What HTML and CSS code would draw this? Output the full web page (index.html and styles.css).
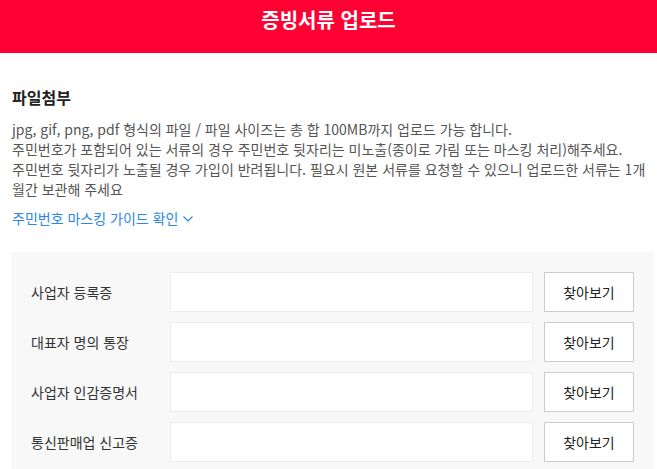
FILE: index.html
```html
<!DOCTYPE html>
<html lang="ko">
<head>
    <meta charset="UTF-8">
    <meta name="viewport" content="width=device-width, initial-scale=1.0">
    <title>증빙서류 업로드</title>
    <link rel="stylesheet" href="styles.css">
</head>
<body>
    <header class="top-bar">증빙서류 업로드</header>

    <section class="attach">
        <h2 class="attach-title">파일첨부</h2>
        <p class="attach-desc">
            jpg, gif, png, pdf 형식의 파일 / 파일 사이즈는 총 합 100MB까지 업로드 가능 합니다.<br>
            주민번호가 포함되어 있는 서류의 경우 주민번호 뒷자리는 미노출(종이로 가림 또는 마스킹 처리)해주세요.<br>
            주민번호 뒷자리가 노출될 경우 가입이 반려됩니다. 필요시 원본 서류를 요청할 수 있으니 업로드한 서류는 1개월간 보관해 주세요
        </p>
        <a class="guide-link" href="#">주민번호 마스킹 가이드 확인
            <svg class="chevron" width="10" height="6" viewBox="0 0 10 6"><path d="M0.5 0.5 L5 5 L9.5 0.5" fill="none" stroke="currentColor" stroke-width="1.2"/></svg>
        </a>

        <div class="file-box">
            <div class="file-row">
                <label class="file-label">사업자 등록증</label>
                <input class="file-name" type="text" readonly>
                <button class="file-btn">찾아보기</button>
            </div>
            <div class="file-row">
                <label class="file-label">대표자 명의 통장</label>
                <input class="file-name" type="text" readonly>
                <button class="file-btn">찾아보기</button>
            </div>
            <div class="file-row">
                <label class="file-label">사업자 인감증명서</label>
                <input class="file-name" type="text" readonly>
                <button class="file-btn">찾아보기</button>
            </div>
            <div class="file-row">
                <label class="file-label">통신판매업 신고증</label>
                <input class="file-name" type="text" readonly>
                <button class="file-btn">찾아보기</button>
            </div>
        </div>
    </section>
</body>
</html>
```

FILE: styles.css
```css
body {
    margin: 0;
    padding: 0;
    font-family: "Noto Sans CJK KR", "Noto Sans", sans-serif;
    color: #333;
    background: #fff;
}

.top-bar {
    height: 53px;
    box-sizing: border-box;
    padding-top: 7px;
    background: #ff0033;
    color: #fff;
    font-size: 20px;
    font-weight: bold;
    line-height: 26px;
    text-align: center;
}

.attach {
    padding: 0 3px 0 11px;
}

.attach-title {
    margin: 33px 0 0 1px;
    font-size: 16px;
    font-weight: bold;
    line-height: 22px;
    color: #222;
}

.attach-desc {
    margin: 11px 0 0 1px;
    font-size: 14px;
    line-height: 20px;
    color: #555;
}

.guide-link {
    display: inline-flex;
    align-items: center;
    gap: 5px;
    margin: 9px 0 0 1px;
    font-size: 14px;
    line-height: 20px;
    color: #2b87e8;
    text-decoration: none;
}

.chevron {
    margin-top: 1px;
}

.file-box {
    margin-top: 23px;
    padding: 20px 20px 10px 20px;
    background: #f8f8f8;
    display: flex;
    flex-direction: column;
    gap: 10px;
}

.file-row {
    display: flex;
    align-items: center;
    height: 40px;
}

.file-label {
    width: 139px;
    font-size: 14px;
    color: #333;
}

.file-name {
    width: 363px;
    height: 40px;
    box-sizing: border-box;
    border: 1px solid #ebebeb;
    background: #fff;
    margin: 0;
    padding: 0 10px;
}

.file-btn {
    width: 90px;
    height: 40px;
    box-sizing: border-box;
    margin-left: 11px;
    border: 1px solid #cccccc;
    background: #fff;
    font-family: inherit;
    font-size: 14px;
    color: #222;
    cursor: pointer;
}
```
